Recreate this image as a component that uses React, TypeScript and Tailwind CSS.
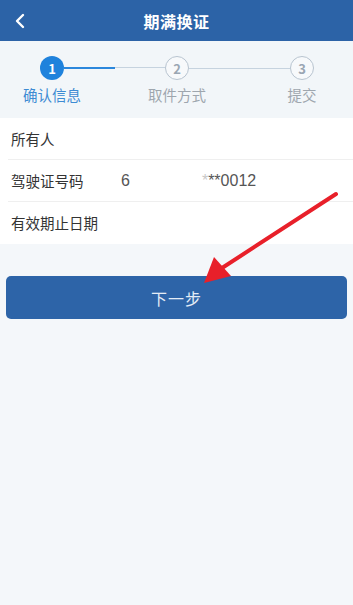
import React from 'react'

const font = { fontFamily: '"Noto Sans CJK SC", "Noto Sans", sans-serif' }

function Circle({ n, active }: { n: number; active?: boolean }) {
  return active ? (
    <div className="w-[24px] h-[24px] rounded-full bg-[#1f82dc] text-white text-[13px] font-bold flex items-center justify-center leading-none">
      {n}
    </div>
  ) : (
    <div className="w-[24px] h-[24px] rounded-full border-[1.5px] border-[#b8c4d0] bg-[#f7f9fb] text-[#9aa6b3] text-[13px] font-bold flex items-center justify-center leading-none">
      {n}
    </div>
  )
}

export default function App() {
  return (
    <div className="relative w-[353px] h-[605px] bg-[#f4f7fa] overflow-hidden" style={font}>
      {/* Header */}
      <div className="relative h-[41px] bg-[#2c63a7] flex items-center justify-center">
        <svg className="absolute left-[14px] top-[13px]" width="12" height="16" viewBox="0 0 12 16">
          <path d="M9 2 L3 8 L9 14" fill="none" stroke="#ffffff" strokeWidth="2.4" strokeLinecap="round" strokeLinejoin="round" />
        </svg>
        <span className="text-white text-[16px] font-bold tracking-[0.5px]">期满换证</span>
      </div>

      {/* Stepper */}
      <div className="h-[77px] bg-[#f2f6f9] pt-[15px]">
        <div className="flex items-center pl-[40px] pr-[39px]">
          <Circle n={1} active />
          <div className="flex-1 flex">
            <div className="h-[2px] w-[51px] bg-[#2b87dc]" />
            <div className="h-[1px] flex-1 bg-[#c6d3df]" />
          </div>
          <Circle n={2} />
          <div className="flex-1 h-[1px] bg-[#c6d3df]" />
          <Circle n={3} />
        </div>
        <div className="flex pl-[12px] pr-[11px] mt-[5px] text-[14.5px] leading-[20px]">
          <div className="w-[80px] text-center text-[#3d8bd3]">确认信息</div>
          <div className="flex-1" />
          <div className="w-[80px] text-center text-[#9ea6ae]">取件方式</div>
          <div className="flex-1" />
          <div className="w-[80px] text-center text-[#9ea6ae]">提交</div>
        </div>
      </div>

      {/* Info rows */}
      <div className="bg-white text-[14.5px] text-[#333333]">
        <div className="h-[42px] flex items-center pl-[3px] ml-[8px] border-b border-[#efefef]">
          <span>所有人</span>
        </div>
        <div className="h-[42px] flex items-center pl-[3px] ml-[8px] border-b border-[#efefef]">
          <span className="w-[110px]">驾驶证号码</span>
          <span className="text-[16px] text-[#555555] font-['Liberation_Sans',sans-serif]">6</span>
          <span className="ml-[72px] text-[16px] text-[#555555] font-['Liberation_Sans',sans-serif]">
            <span className="text-[#c8c8c8]">*</span>**0012
          </span>
        </div>
        <div className="h-[42px] flex items-center pl-[11px]">
          <span>有效期止日期</span>
        </div>
      </div>

      {/* Next button */}
      <div className="px-[6px] pt-[32px]">
        <button className="w-full h-[43px] rounded-[5px] bg-[#2d64a8] text-[#e4ecf6] text-[16px] tracking-[1px]">
          下一步
        </button>
      </div>

      {/* Red annotation arrow */}
      <svg className="absolute left-0 top-0 pointer-events-none" width="353" height="605" viewBox="0 0 353 605">
        <line x1="336" y1="194" x2="222" y2="268" stroke="#e8202a" strokeWidth="4" strokeLinecap="round" />
        <polygon points="204,283 214,257 231,276" fill="#e8202a" />
      </svg>
    </div>
  )
}
